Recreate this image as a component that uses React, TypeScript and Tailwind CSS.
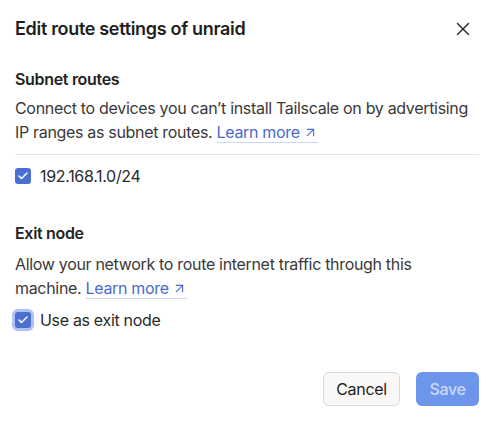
import { X, ArrowUpRight, Check } from "lucide-react";

function LearnMore() {
  return (
    <a className="whitespace-nowrap border-b border-[#c9d6f4] text-[#4a6bcb]">
      Learn more
      <ArrowUpRight className="ml-[3px] inline-block h-[15px] w-[15px] align-[-2px]" strokeWidth={1.75} />
    </a>
  );
}

function Checkbox({ focused }: { focused?: boolean }) {
  return (
    <span
      className={`grid h-4 w-4 shrink-0 place-items-center rounded-[3px] bg-[#4c6fd2] ${
        focused ? "ring-[3px] ring-[#aec3f4]" : ""
      }`}
    >
      <Check className="h-3 w-3 text-white" strokeWidth={3} />
    </span>
  );
}

export default function App() {
  return (
    <div
      className="h-[422px] w-[495px] bg-white pl-[15px] pr-[16px] pt-[15px] tracking-[-0.02em] text-[#232222]"
      style={{ fontFamily: "Inter, 'Noto Sans', sans-serif" }}
    >
      {/* Header */}
      <div className="flex h-7 items-center justify-between">
        <h2 className="text-[18px] font-semibold leading-7 text-[#1f1e1e]">
          Edit route settings of unraid
        </h2>
        <button className="mr-[5px] text-[#2a2a2a]">
          <X className="h-[22px] w-[22px]" strokeWidth={1.6} />
        </button>
      </div>

      {/* Subnet routes */}
      <h3 className="mt-[24px] text-[16px] font-semibold leading-6">Subnet routes</h3>
      <p className="mt-[5px] text-[16px] leading-6 text-[#3a3939]">
        Connect to devices you can’t install Tailscale on by advertising IP ranges as subnet
        routes. <LearnMore />
      </p>
      <div className="mt-[10px] border-t border-[#e6e4e2]" />
      <label className="mt-[9px] flex h-6 items-center gap-[9px] text-[16px] text-[#2a2929]">
        <Checkbox />
        192.168.1.0/24
      </label>

      {/* Exit node */}
      <h3 className="mt-[33px] text-[16px] font-semibold leading-6">Exit node</h3>
      <p className="mt-[7px] text-[16px] leading-6 text-[#3a3939]">
        Allow your network to route internet traffic through this machine. <LearnMore />
      </p>
      <label className="mt-[8px] flex h-6 items-center gap-[9px] text-[16px] text-[#2a2929]">
        <Checkbox focused />
        Use as exit node
      </label>

      {/* Footer */}
      <div className="mt-[40px] flex justify-end gap-4">
        <button className="h-[34px] w-[77px] rounded-md border border-[#dcd9d6] bg-[#f9f8f7] text-[16px] text-[#1f1e1e]">
          Cancel
        </button>
        <button className="h-[34px] w-[63px] rounded-md bg-[#6d95ec] text-[16px] font-medium text-[#cbdaf9]">
          Save
        </button>
      </div>
    </div>
  );
}
